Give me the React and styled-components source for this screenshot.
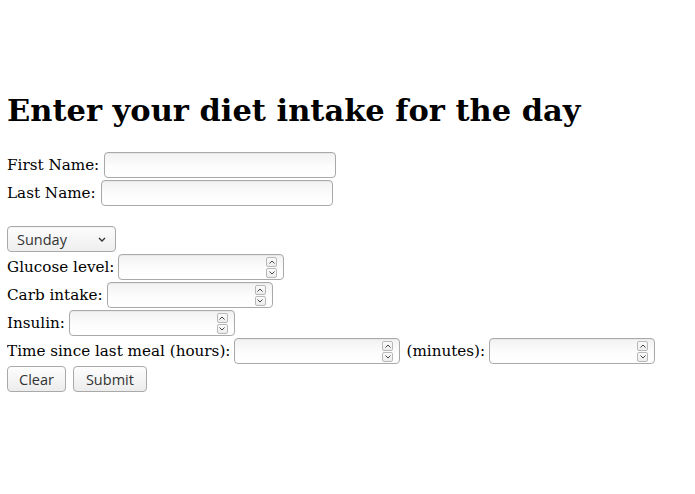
import styled, { createGlobalStyle } from "styled-components";

const Global = createGlobalStyle`
  body {
    margin: 8px 8px 8px 7px;
    font-family: "DejaVu Serif", serif;
    font-size: 15.2px;
    color: #000;
    background: #fff;
  }
`;

const Page = styled.div`
  padding-top: 66px;
`;

const Title = styled.h1`
  font-family: "DejaVu Serif", serif;
  font-size: 30.5px;
  font-weight: bold;
  margin: 18px 0 23px;
  line-height: 36px;
`;

const Form = styled.form`
  display: flex;
  flex-direction: column;
`;

const Row = styled.div`
  display: flex;
  align-items: center;
  height: 28px;
  white-space: nowrap;
`;

const Spacer = styled.div`
  height: 18px;
`;

const Label = styled.span`
  margin-right: ${(p) => p.$gap || 4}px;
  margin-left: ${(p) => p.$lead || 0}px;
`;

const fieldLook = `
  box-sizing: border-box;
  height: 26px;
  border: 1px solid #a9a9a9;
  border-radius: 4px;
  background: linear-gradient(#f2f2f2, #fdfdfd 60%, #fff);
  box-shadow: inset 0 1px 1px rgba(0,0,0,0.04);
`;

const TextInput = styled.input`
  ${fieldLook}
  width: ${(p) => p.$w}px;
  padding: 0 6px;
  font: 14px "DejaVu Sans", sans-serif;
  outline: none;
`;

const NumberBox = styled.div`
  ${fieldLook}
  width: ${(p) => p.$w}px;
  display: flex;
  align-items: center;
  padding: 0 6px 0 4px;
  gap: 2px;
`;

const NumberInput = styled.input`
  flex: 1;
  min-width: 0;
  border: none;
  background: transparent;
  outline: none;
  font: 14px "DejaVu Sans", sans-serif;
`;

const Spin = styled.div`
  display: flex;
  flex-direction: column;
  gap: 1px;
`;

const SpinBtn = styled.div`
  width: 11px;
  height: 10px;
  box-sizing: border-box;
  border: 1px solid #b8b8b8;
  border-radius: 2px;
  background: linear-gradient(#fbfbfb, #ececec);
  display: flex;
  align-items: center;
  justify-content: center;
`;

const Select = styled.div`
  ${fieldLook}
  width: 109px;
  display: flex;
  align-items: center;
  justify-content: space-between;
  padding: 0 9px 0 9px;
  font: 14.5px "Open Sans", "DejaVu Sans", sans-serif;
  color: #333;
  background: linear-gradient(#fdfdfd, #eeeeee);
`;

const Button = styled.button`
  box-sizing: border-box;
  height: 26px;
  padding: 0 ${(p) => p.$pad || 12}px;
  margin-right: 7px;
  border: 1px solid #a9a9a9;
  border-radius: 4px;
  background: linear-gradient(#fdfdfd, #ececec);
  font: 14.5px "Open Sans", "DejaVu Sans", sans-serif;
  color: #333;
`;

function Chevron({ up }) {
  return (
    <svg width="6" height="4" viewBox="0 0 6 4">
      <path
        d={up ? "M0.5 3.5 L3 1 L5.5 3.5" : "M0.5 0.5 L3 3 L5.5 0.5"}
        fill="none"
        stroke="#444"
        strokeWidth="1"
      />
    </svg>
  );
}

function NumberField({ w }) {
  return (
    <NumberBox $w={w}>
      <NumberInput type="text" />
      <Spin>
        <SpinBtn>
          <Chevron up />
        </SpinBtn>
        <SpinBtn>
          <Chevron />
        </SpinBtn>
      </Spin>
    </NumberBox>
  );
}

export default function App() {
  return (
    <Page>
      <Global />
      <Title>Enter your diet intake for the day</Title>
      <Form onSubmit={(e) => e.preventDefault()}>
        <Row>
          <Label $gap={5}>First Name:</Label>
          <TextInput $w={232} />
        </Row>
        <Row>
          <Label $gap={5}>Last Name:</Label>
          <TextInput $w={232} />
        </Row>
        <Spacer />
        <Row>
          <Select>
            <span>Sunday</span>
            <svg width="8" height="5" viewBox="0 0 8 5">
              <path d="M1 1 L4 4 L7 1" fill="none" stroke="#333" strokeWidth="1.4" />
            </svg>
          </Select>
        </Row>
        <Row>
          <Label>Glucose level:</Label>
          <NumberField w={166} />
        </Row>
        <Row>
          <Label>Carb intake:</Label>
          <NumberField w={166} />
        </Row>
        <Row>
          <Label>Insulin:</Label>
          <NumberField w={166} />
        </Row>
        <Row>
          <Label>Time since last meal (hours):</Label>
          <NumberField w={166} />
          <Label $lead={6}>(minutes):</Label>
          <NumberField w={166} />
        </Row>
        <Row>
          <Button type="button" $pad={11}>Clear</Button>
          <Button type="submit" $pad={12}>Submit</Button>
        </Row>
      </Form>
    </Page>
  );
}
